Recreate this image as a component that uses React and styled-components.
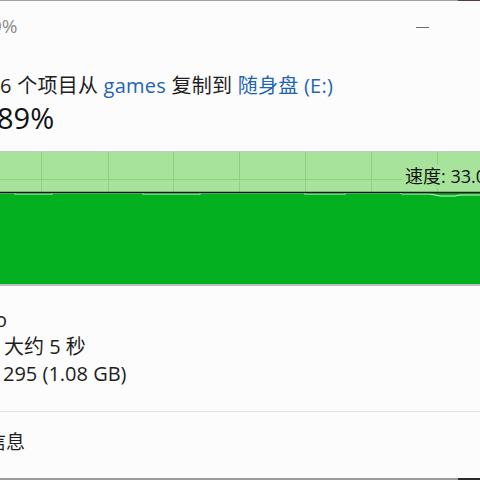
import React from 'react';
import styled, { createGlobalStyle } from 'styled-components';

const GlobalStyle = createGlobalStyle`
  html, body {
    margin: 0;
    padding: 0;
    background: #fcfcfc;
  }
  body {
    font-family: "Open Sans", "Noto Sans CJK SC", sans-serif;
    overflow: hidden;
  }
`;

const gridX = [41, 108, 173, 239, 305, 371, 437];

const App = () => {
  return (
    <>
      <GlobalStyle />
      <Window>
        <EdgeLine>
          <EdgeCorner $color="#5a3a3a" />
        </EdgeLine>
        <TitleBar>
          <TitleText>9%</TitleText>
          <Minimize />
        </TitleBar>
        <Content>
          <Headline>
            6 个项目从 <Link>games</Link> 复制到 <Link>随身盘 (E:)</Link>
          </Headline>
          <Percent>89%</Percent>
        </Content>
        <Graph>
          <svg width="480" height="132" viewBox="0 0 480 132">
            <rect x="0" y="0" width="480" height="40" fill="#a7e39b" />
            {gridX.map((x) => (
              <line key={x} x1={x + 0.5} y1="0" x2={x + 0.5} y2="40" stroke="#8fcf83" strokeWidth="1" />
            ))}
            <line x1="0" y1="27.5" x2="480" y2="27.5" stroke="#8fcf83" strokeWidth="1" />
            <rect x="0" y="41" width="480" height="91" fill="#03b01f" />
            <path
              d="M0 41 L15 41 L15 42 L52 42 L52 41 L143 41 L143 42 L200 42 L200 41 L305 41 L305 42 L345 42 L345 41 L400 41 L402 42 L430 42 L440 44 L455 44 L460 43 L480 43"
              fill="none"
              stroke="#d8f2d2"
              strokeWidth="1.2"
            />
            <line x1="0" y1="40.5" x2="480" y2="40.5" stroke="#1a1a1a" strokeWidth="1.5" />
          </svg>
          <SpeedLabel>速度: 33.0 MB/秒</SpeedLabel>
        </Graph>
        <Details>
          <DetailLine $shift={-5}>o</DetailLine>
          <DetailLine $shift={4}>大约 5 秒</DetailLine>
          <DetailLine $shift={3}>295 (1.08 GB)</DetailLine>
        </Details>
        <Footer>
          <FooterText>信息</FooterText>
        </Footer>
        <EdgeLine $bottom>
          <EdgeCorner $color="#2a2a2a" />
        </EdgeLine>
      </Window>
    </>
  );
};

const Window = styled.div`
  width: 480px;
  height: 480px;
  display: flex;
  flex-direction: column;
  overflow: hidden;
  background: #fcfcfc;
`;

const EdgeLine = styled.div`
  height: ${(p) => (p.$bottom ? '2px' : '1px')};
  background: ${(p) => (p.$bottom ? '#9a9a9a' : '#a0a0a0')};
  display: flex;
  justify-content: flex-end;
  flex-shrink: 0;
  margin-top: ${(p) => (p.$bottom ? 'auto' : '0')};
`;

const EdgeCorner = styled.div`
  width: 22px;
  background: ${(p) => p.$color};
`;

const TitleBar = styled.div`
  height: 50px;
  display: flex;
  align-items: center;
  justify-content: space-between;
  padding-right: 51px;
  flex-shrink: 0;
`;

const TitleText = styled.div`
  font-size: 19px;
  color: #8c8c8c;
  margin-left: -9px;
  margin-top: -1px;
`;

const Minimize = styled.div`
  width: 13px;
  height: 1px;
  background: #6a6a6a;
  margin-top: 2px;
`;

const Content = styled.div`
  display: flex;
  flex-direction: column;
  padding-top: 21px;
  flex-shrink: 0;
`;

const Headline = styled.div`
  font-size: 20px;
  line-height: 28px;
  letter-spacing: 0.25px;
  color: #1e1e1e;
  white-space: nowrap;
`;

const Link = styled.span`
  color: #1f65b4;
`;

const Percent = styled.div`
  font-size: 29px;
  line-height: 36px;
  color: #111;
  margin-left: -3px;
`;

const Graph = styled.div`
  position: relative;
  margin-top: 15px;
  height: 132px;
  border-top: 1px solid #c6c6c6;
  border-bottom: 2px solid #bdbdbd;
  flex-shrink: 0;

  svg {
    display: block;
  }
`;

const SpeedLabel = styled.div`
  position: absolute;
  top: 12px;
  left: 403px;
  padding: 0 2px;
  background: #a7e39b;
  font-size: 18px;
  line-height: 24px;
  color: #111;
  white-space: nowrap;
`;

const Details = styled.div`
  display: flex;
  flex-direction: column;
  padding-top: 20px;
  padding-bottom: 24px;
  border-bottom: 1px solid #e3e3e3;
  flex-shrink: 0;
`;

const DetailLine = styled.div`
  font-size: 20px;
  line-height: 27px;
  color: #1e1e1e;
  margin-left: ${(p) => p.$shift}px;
  white-space: nowrap;
`;

const Footer = styled.div`
  padding-top: 16px;
  flex-shrink: 0;
`;

const FooterText = styled.div`
  font-size: 19px;
  line-height: 28px;
  color: #1e1e1e;
  margin-left: -13px;
`;

export default App;
